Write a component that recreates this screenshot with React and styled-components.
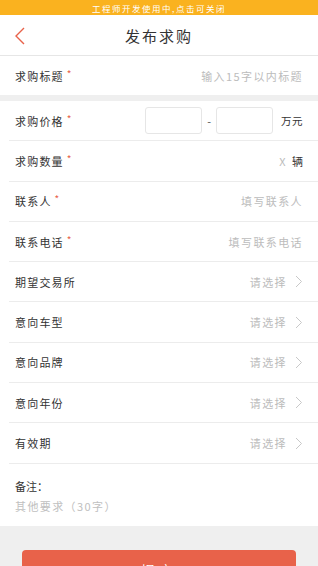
import React from "react";
import styled, { createGlobalStyle } from "styled-components";

const Global = createGlobalStyle`
  html, body { margin: 0; padding: 0; background: #efefef; }
  body { font-family: "Noto Sans CJK SC", "Noto Sans", sans-serif; }
  * { box-sizing: border-box; }
`;

const Page = styled.div`
  width: 318px;
  min-height: 566px;
  background: #efefef;
  display: flex;
  flex-direction: column;
`;

const Banner = styled.div`
  height: 15px;
  background: #fab21f;
  color: #fff;
  font-size: 8.5px;
  letter-spacing: 1.5px;
  display: flex;
  align-items: center;
  justify-content: center;
`;

const Header = styled.div`
  height: 41px;
  background: #fff;
  border-bottom: 1px solid #e6e6e6;
  display: flex;
  align-items: center;
  justify-content: center;
  position: relative;
`;

const Back = styled.svg`
  position: absolute;
  left: 14px;
  top: 12px;
`;

const Title = styled.div`
  font-size: 15px;
  color: #333;
  letter-spacing: 2px;
`;

const Section = styled.div`
  background: #fff;
  margin-top: ${(p) => (p.$gap ? "6px" : "0")};
`;

const Row = styled.div`
  height: ${(p) => p.$h || "40.3px"};
  margin-left: 9px;
  padding: 0 15px 0 6px;
  display: flex;
  align-items: center;
  border-bottom: ${(p) => (p.$noLine ? "none" : "1px solid #ececec")};
`;

const Label = styled.div`
  font-size: 11px;
  color: #333;
  letter-spacing: 1.2px;
  display: flex;
  align-items: center;
`;

const Star = styled.span`
  color: #e8624a;
  font-size: 10px;
  margin-left: 3px;
  line-height: 1;
  position: relative;
  top: -2px;
`;

const Right = styled.div`
  margin-left: auto;
  display: flex;
  align-items: center;
  font-size: 11px;
  color: #bcbcbc;
  letter-spacing: 1.4px;
`;

const Dark = styled.span`
  color: #333;
  margin-left: 5px;
  letter-spacing: 0;
`;

const Box = styled.div`
  width: 57px;
  height: 27px;
  border: 1px solid #e6e6e6;
  border-radius: 3px;
  background: #fff;
`;

const Dash = styled.span`
  color: #555;
  margin: 0 5px;
  font-size: 11px;
  letter-spacing: 0;
`;

const Unit = styled.span`
  color: #333;
  margin-left: 8px;
  font-size: 10.5px;
  letter-spacing: 0.5px;
`;

const Chevron = styled.svg`
  margin-left: 8px;
`;

const Remarks = styled.div`
  background: #fff;
  padding: 14px 0 12px 15px;
  display: flex;
  flex-direction: column;
  gap: 4px;
`;

const RemarkLabel = styled.div`
  font-size: 11px;
  color: #333;
`;

const RemarkHint = styled.div`
  font-size: 11px;
  color: #c0c0c0;
  letter-spacing: 1.4px;
`;

const Footer = styled.div`
  padding: 24px 22px 0 22px;
`;

const Button = styled.div`
  height: 40px;
  background: #e8624a;
  border-radius: 4px;
  color: #fff;
  font-size: 14px;
  display: flex;
  align-items: center;
  justify-content: center;
  letter-spacing: 4px;
`;

const ChevronIcon = () => (
  <Chevron width="8" height="13" viewBox="0 0 8 13">
    <path d="M1 1l5.5 5.5L1 12" fill="none" stroke="#c8c8c8" strokeWidth="1" />
  </Chevron>
);

const selects = ["期望交易所", "意向车型", "意向品牌", "意向年份", "有效期"];

export default function App() {
  return (
    <Page>
      <Global />
      <Banner>工程师开发使用中,点击可关闭</Banner>
      <Header>
        <Back width="12" height="18" viewBox="0 0 12 18">
          <path d="M10 1L2 9l8 8" fill="none" stroke="#e8624a" strokeWidth="1.4" />
        </Back>
        <Title>发布求购</Title>
      </Header>
      <Section>
        <Row $noLine $h="39px">
          <Label>求购标题<Star>*</Star></Label>
          <Right>输入15字以内标题</Right>
        </Row>
      </Section>
      <Section $gap>
        <Row>
          <Label>求购价格<Star>*</Star></Label>
          <Right>
            <Box />
            <Dash>-</Dash>
            <Box />
            <Unit>万元</Unit>
          </Right>
        </Row>
        <Row>
          <Label>求购数量<Star>*</Star></Label>
          <Right>X<Dark>辆</Dark></Right>
        </Row>
        <Row>
          <Label>联系人<Star>*</Star></Label>
          <Right>填写联系人</Right>
        </Row>
        <Row>
          <Label>联系电话<Star>*</Star></Label>
          <Right>填写联系电话</Right>
        </Row>
        {selects.map((s) => (
          <Row key={s}>
            <Label>{s}</Label>
            <Right>请选择<ChevronIcon /></Right>
          </Row>
        ))}
      </Section>
      <Remarks>
        <RemarkLabel>备注：</RemarkLabel>
        <RemarkHint>其他要求（30字）</RemarkHint>
      </Remarks>
      <Footer>
        <Button>提交</Button>
      </Footer>
    </Page>
  );
}
